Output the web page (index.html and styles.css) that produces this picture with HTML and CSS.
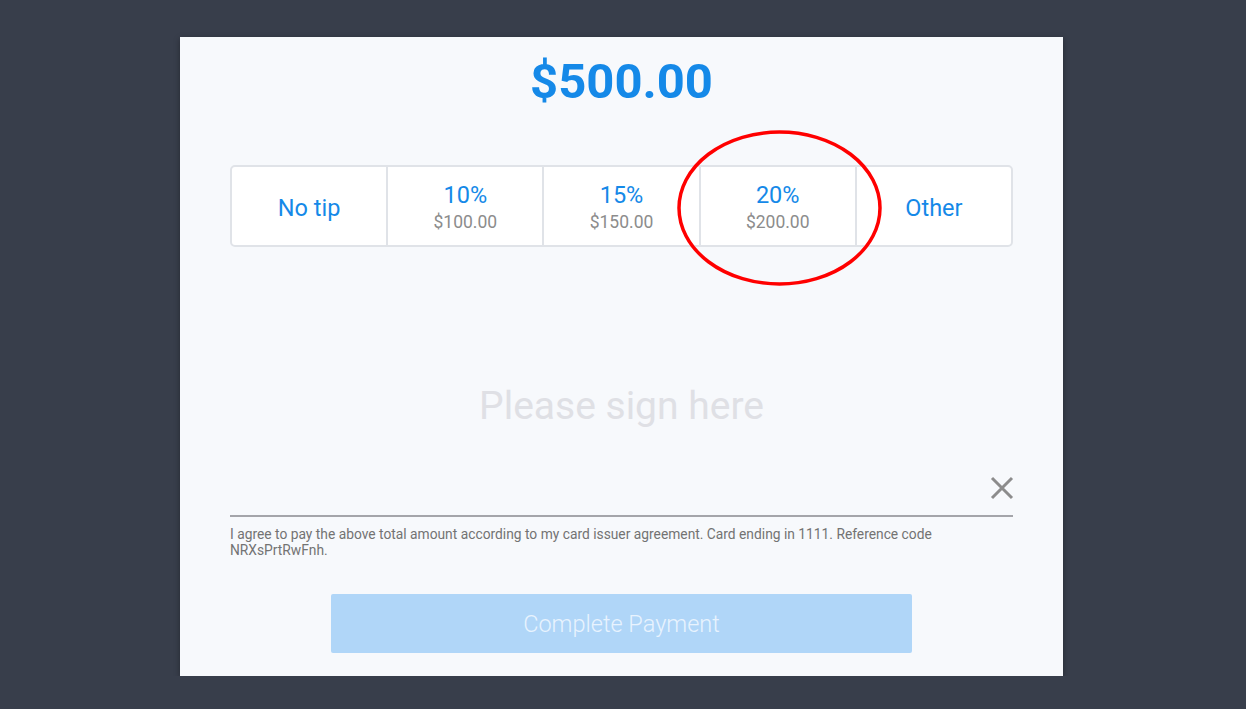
FILE: index.html
```html
<!DOCTYPE html>
<html>
<head>
<meta charset="utf-8">
<link rel="stylesheet" href="styles.css">
</head>
<body>
<div class="card">
  <h1 class="amount">$500.00</h1>
  <div class="tips">
    <button class="tip"><span class="tip-main">No tip</span></button>
    <button class="tip"><span class="tip-main">10%</span><span class="tip-sub">$100.00</span></button>
    <button class="tip"><span class="tip-main">15%</span><span class="tip-sub">$150.00</span></button>
    <button class="tip tip-marked"><span class="tip-main">20%</span><span class="tip-sub">$200.00</span>
      <svg class="ring" width="205" height="156" viewBox="0 0 205 156"><ellipse cx="102.5" cy="78" rx="100.5" ry="76" fill="none" stroke="#f00" stroke-width="3.5"/></svg>
    </button>
    <button class="tip"><span class="tip-main">Other</span></button>
  </div>
  <div class="pad">
    <span class="pad-hint">Please sign here</span>
    <svg class="clear" width="24" height="24" viewBox="0 0 24 24"><path d="M2 2L22 22M22 2L2 22" stroke="#8c8c8c" stroke-width="3" fill="none"/></svg>
  </div>
  <p class="legal">I agree to pay the above total amount according to my card issuer agreement. Card ending in 1111. Reference code NRXsPrtRwFnh.</p>
  <button class="pay">Complete Payment</button>
</div>
</body>
</html>
```
FILE: styles.css
```css
html, body {
  margin: 0;
  padding: 0;
  background: #383e4b;
  font-family: Roboto, "Liberation Sans", sans-serif;
}
body {
  padding: 37px 0 0 180px;
}
.card {
  width: 883px;
  height: 639px;
  box-sizing: border-box;
  background: #f7f9fc;
  box-shadow: 0 2px 6px rgba(0,0,0,0.35);
  padding: 17px 50px 0 50px;
  display: flex;
  flex-direction: column;
}
.amount {
  margin: 0;
  text-align: center;
  font-size: 49px;
  line-height: 56px;
  font-weight: 700;
  color: #1589e8;
}
.tips {
  margin-top: 55px;
  display: flex;
  height: 82px;
  border: 2px solid #e0e3e8;
  border-radius: 5px;
  background: #fff;
  box-sizing: border-box;
}
.tip {
  flex: 1;
  border: 0;
  border-left: 2px solid #e0e3e8;
  background: transparent;
  font-family: inherit;
  padding: 3px 0 0 0;
  display: flex;
  flex-direction: column;
  align-items: center;
  justify-content: center;
}
.tip:first-child {
  border-left: 0;
}
.tip-main {
  font-size: 23.5px;
  line-height: 26px;
  color: #1589e8;
}
.tip-sub {
  font-size: 17.5px;
  line-height: 22px;
  color: #8c8c8c;
  margin-top: 3px;
}
.tip-marked {
  position: relative;
}
.ring {
  position: absolute;
  left: -24px;
  top: -37px;
  pointer-events: none;
}
.pad {
  position: relative;
  height: 270px;
  border-bottom: 2px solid #a4a5aa;
  display: flex;
  align-items: center;
  justify-content: center;
  padding-top: 50px;
  box-sizing: border-box;
}
.pad-hint {
  font-size: 39px;
  color: #dfe0e5;
}
.clear {
  position: absolute;
  right: -1px;
  bottom: 15px;
}
.legal {
  margin: 9px 0 0 0;
  font-size: 13.8px;
  line-height: 16px;
  color: #737373;
}
.pay {
  margin: 36px auto 0 auto;
  width: 581px;
  height: 59px;
  border: 0;
  border-radius: 2px;
  background: #b0d6f8;
  color: #e8f3fe;
  font-family: inherit;
  font-size: 23.5px;
  font-weight: 300;
}
```
